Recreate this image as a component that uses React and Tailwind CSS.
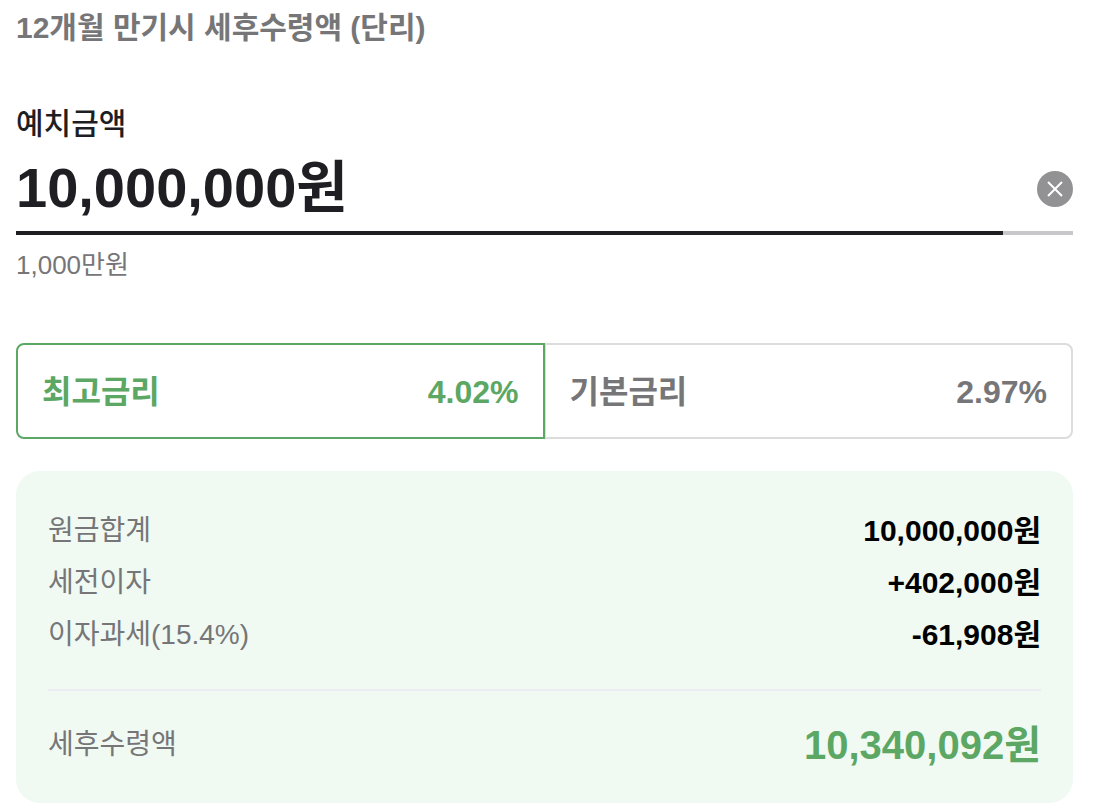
import { useState } from "react";

const RATES = [
  { id: "max", label: "최고금리", rate: "4.02%" },
  { id: "base", label: "기본금리", rate: "2.97%" },
];

const SUMMARIES = {
  max: {
    rows: [
      { label: "원금합계", value: "10,000,000원" },
      { label: "세전이자", value: "+402,000원" },
      { label: "이자과세(15.4%)", value: "-61,908원" },
    ],
    total: "10,340,092원",
  },
  base: {
    rows: [
      { label: "원금합계", value: "10,000,000원" },
      { label: "세전이자", value: "+297,000원" },
      { label: "이자과세(15.4%)", value: "-45,738원" },
    ],
    total: "10,251,262원",
  },
};

function AmountField() {
  const [amount, setAmount] = useState("10,000,000원");
  return (
    <div className="mt-14">
      <label htmlFor="amount" className="block text-[30px] leading-10 font-medium text-[#1e1e23]">
        예치금액
      </label>
      <div className="mt-[2px] flex">
        <input
          id="amount"
          type="text"
          value={amount}
          onChange={(e) => setAmount(e.target.value)}
          className="h-[89px] min-w-0 flex-1 border-b-4 border-[#1e1e23] bg-transparent pb-3 text-[56px] font-bold text-[#1e1e23] outline-none"
        />
        <div className="flex w-[70px] items-center justify-end border-b-4 border-[#c8c8ca]">
          <button type="button" aria-label="금액 지우기" onClick={() => setAmount("")} className="size-9">
            <svg viewBox="0 0 36 36" className="size-9" aria-hidden="true">
              <circle cx="18" cy="18" r="18" fill="#929294" />
              <path d="M11 11L25 25M25 11L11 25" stroke="#fff" strokeWidth="2" fill="none" />
            </svg>
          </button>
        </div>
      </div>
      <p className="mt-[10px] text-[26px] leading-10 text-[#767678]">1,000만원</p>
    </div>
  );
}

function RateTabs({ selected, onSelect }) {
  return (
    <div className="mt-[58px] grid grid-cols-2">
      {RATES.map(({ id, label, rate }) => (
        <button
          key={id}
          type="button"
          aria-pressed={selected === id}
          onClick={() => onSelect(id)}
          className={`flex h-24 items-center justify-between border-2 px-6 pt-[2px] text-[32px] font-bold first:rounded-l-lg last:-ml-px last:rounded-r-lg ${
            selected === id ? "z-10 border-[#5ba763] text-[#5ba763]" : "border-[#dcdcdc] text-[#767678]"
          }`}
        >
          <span>{label}</span>
          <span>{rate}</span>
        </button>
      ))}
    </div>
  );
}

function Summary({ rows, total }) {
  return (
    <dl className="mt-8 rounded-3xl bg-[#f0faf3] px-8 pt-[34px] pb-[30px]">
      {rows.map(({ label, value }) => (
        <div key={label} className="flex items-center justify-between leading-[52px]">
          <dt className="text-[28px] text-[#767678]">{label}</dt>
          <dd className="text-[30px] font-bold text-black">{value}</dd>
        </div>
      ))}
      <div className="mt-7 flex items-center justify-between border-t-2 border-[#ecedf2] pt-[26px] leading-14">
        <dt className="text-[28px] text-[#767678]">세후수령액</dt>
        <dd className="text-[40px] font-bold text-[#5ba763]">{total}</dd>
      </div>
    </dl>
  );
}

export default function App() {
  const [selected, setSelected] = useState("max");
  return (
    <main className="bg-white pt-2 pr-[21px] pb-2 pl-4 font-['Liberation_Sans','Noto_Sans_CJK_KR',sans-serif]">
      <h1 className="text-[30px] leading-10 font-bold text-[#767678]">12개월 만기시 세후수령액 (단리)</h1>
      <AmountField />
      <RateTabs selected={selected} onSelect={setSelected} />
      <Summary {...SUMMARIES[selected]} />
    </main>
  );
}
